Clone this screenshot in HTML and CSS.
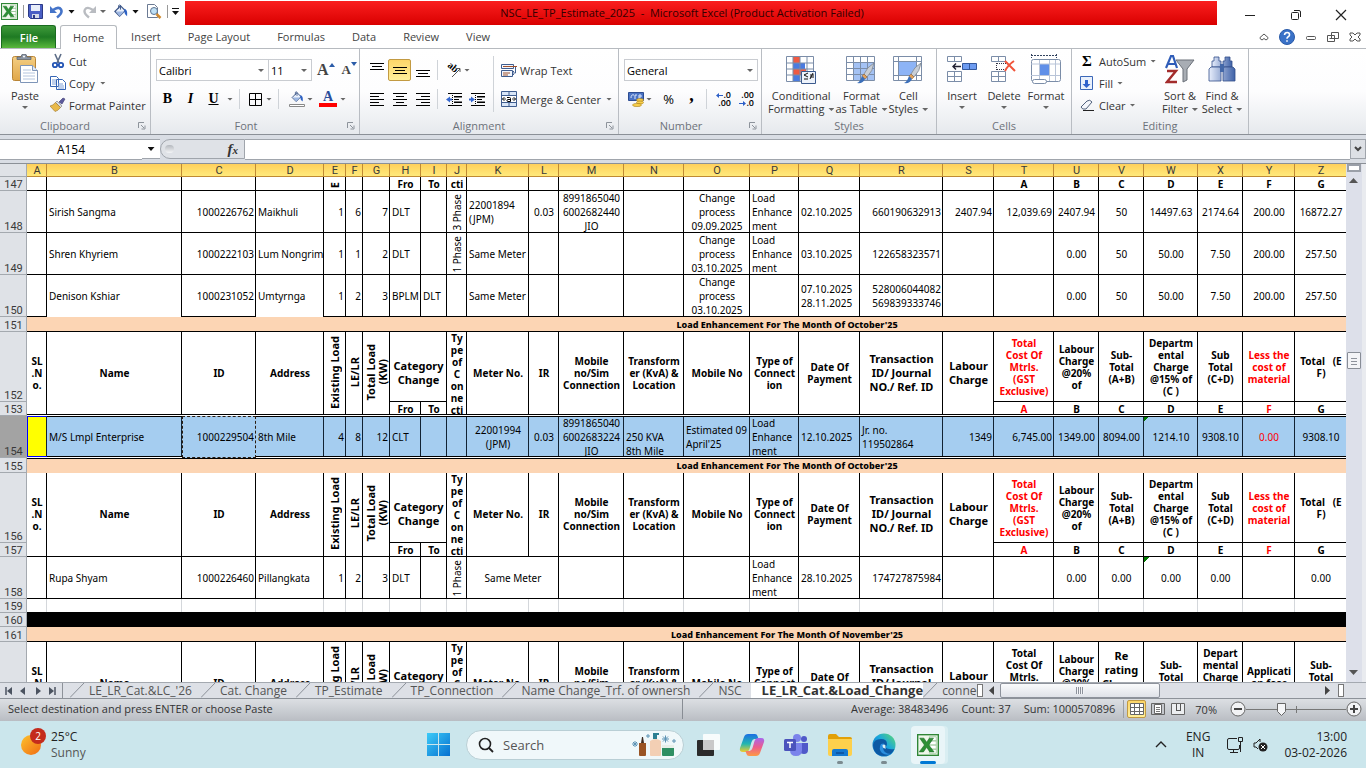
FILE: index.html
```
<!doctype html>
<html lang="en">
 <head>
  <meta charset="utf-8">
  <title>NSC_LE_TP_Estimate_2025 - Microsoft Excel</title>
  <link rel="stylesheet" href="styles.css">
 </head>

 <body>
  <!-- shared icon shapes -->
  <svg class="defs" width="0" height="0">
   <defs>
    <linearGradient id="steel" x1="0" y1="0" x2="1" y2="0"><stop offset="0" stop-color="#e8eefc"/><stop offset="1" stop-color="#3f62a8"/></linearGradient>
    <linearGradient id="clip" x1="0" y1="0" x2="0" y2="1"><stop offset="0" stop-color="#f4cf85"/><stop offset="1" stop-color="#e0a648"/></linearGradient>
    <linearGradient id="sun" x1="0" y1="0" x2="1" y2="1"><stop offset="0" stop-color="#fdc32e"/><stop offset="1" stop-color="#f06a12"/></linearGradient>
    <linearGradient id="win" x1="0" y1="0" x2="1" y2="1"><stop offset="0" stop-color="#3ccbf8"/><stop offset="1" stop-color="#0670d0"/></linearGradient>
    <linearGradient id="edge" x1="0" y1="1" x2="1" y2="0"><stop offset="0" stop-color="#0b5bb5"/><stop offset=".55" stop-color="#1aa6dd"/><stop offset="1" stop-color="#5fdc6c"/></linearGradient>
    <linearGradient id="cop1" x1="0" y1="0" x2="0" y2="1"><stop offset="0" stop-color="#1b6fe4"/><stop offset=".55" stop-color="#23b7b0"/><stop offset="1" stop-color="#f1cd2b"/></linearGradient>
    <linearGradient id="cop2" x1="0" y1="0" x2="0" y2="1"><stop offset="0" stop-color="#a766ee"/><stop offset=".5" stop-color="#ec5d8d"/><stop offset="1" stop-color="#fd9a44"/></linearGradient>
    <symbol id="excel" viewBox="0 0 16 16">
     <rect x=".5" y=".5" width="15" height="15" fill="#eef7ea" stroke="#2f8636"/>
     <path d="M9 2h5v12H9z" fill="#fff" stroke="#9bc79b" stroke-width=".6"/>
     <path d="M9 5h5M9 8h5M9 11h5" stroke="#7db77d" stroke-width=".7"/>
     <path d="M2 3h3l2 3 2-3h3L8.600 8l3.800 5H9.300L7 9.700 4.700 13H1.600l3.800-5z" fill="#2d8f35" stroke="#176b22" stroke-width=".4"/>
    </symbol>
    <symbol id="bucket" viewBox="0 0 16 16">
     <path d="M2 8l6-6 5 5-6 6z" fill="#eaf0fa" stroke="#3c5688" stroke-width="1.200"/>
     <path d="M3 8h9l-5 5z" fill="#9db7e3"/>
     <path d="M6 5V1.500q1.500-1 2 0V6" fill="none" stroke="#3c5688"/>
     <path d="M12 5q4 1 3 8-3-2-3-5z" fill="#2d62c4"/>
    </symbol>
    <symbol id="brush" viewBox="0 0 18 22">
     <path d="M17 1Q10 5 7 12l3 3q6-6 7-14z" fill="#c8ced6" stroke="#737d88" stroke-width=".7"/>
     <path d="M7 12l3 3-2 2-3-3z" fill="#e1a25c" stroke="#8c5a27" stroke-width=".5"/>
     <path d="M5 14l3 3q-2 5-8 4 3-1 5-7z" fill="#3b6fb9"/>
    </symbol>
    <symbol id="launch" viewBox="0 0 8 8">
     <path d="M.5 6V.5H6" fill="none" stroke="#8d939b"/><path d="M3 3l3 3M7 3.500V7H3.500" fill="none" stroke="#8d939b"/>
    </symbol>
   </defs>
  </svg>

  <header class="titlebar">
   <div class="quick">
    <svg width="17" height="17"><use href="#excel"/></svg>
    <i class="bar"></i>
    <button aria-label="Save"><svg width="15" height="15" viewBox="0 0 15 15"><path d="M.5.5h14v14h-12l-2-2z" fill="#4a5fc4" stroke="#2c3a86"/><path d="M3 1h9v6H3z" fill="#e8edf9"/><path d="M4 10h7v4H4z" fill="#d5dbe8"/><path d="M5 11h2v3H5z" fill="#2c3a86"/></svg></button>
    <button aria-label="Undo" class="drop"><svg width="14" height="14" viewBox="0 0 14 14"><path d="M3 5q6-4 8-.5T7 12.500" fill="none" stroke="#4574c9" stroke-width="2.600"/><path d="M0 1v7h7z" fill="#4574c9"/></svg><i class="caret dark"></i></button>
    <button aria-label="Redo" class="drop"><svg width="14" height="14" viewBox="0 0 14 14"><path d="M11 5Q5 1 3 4.500T7 12.500" fill="none" stroke="#b9bcc1" stroke-width="2.400"/><path d="M14 1v7H7z" fill="#b9bcc1"/></svg><i class="caret"></i></button>
    <button aria-label="Fill colour" class="drop"><svg width="15" height="15"><use href="#bucket"/></svg><i class="caret dark"></i></button>
    <button aria-label="Print preview"><svg width="16" height="15" viewBox="0 0 16 15"><path d="M1.500.5h7l3 3v10h-10z" fill="#fff" stroke="#6b7a93"/><circle cx="8" cy="7" r="3.500" fill="#bfe0f5" stroke="#5c7391"/><path d="M10.500 10l4 4" stroke="#d08a30" stroke-width="2.500"/></svg></button>
    <i class="bar"></i>
    <button aria-label="Customize toolbar" class="custom"><i class="caret dark"></i></button>
   </div>
   <h1>NSC_LE_TP_Estimate_2025 &nbsp;-&nbsp; Microsoft Excel (Product Activation Failed)</h1>
   <div class="winctl">
    <button aria-label="Minimize"><svg width="12" height="12"><path d="M1 6.500h10" stroke="#222"/></svg></button>
    <button aria-label="Restore"><svg width="12" height="12"><rect x="1.500" y="3.500" width="7" height="7" rx="1" fill="none" stroke="#222"/><path d="M4 1.500h5q1.500 0 1.500 1.500v5" fill="none" stroke="#222"/></svg></button>
    <button aria-label="Close"><svg width="12" height="12"><path d="M1 1l10 10M11 1L1 11" stroke="#222" stroke-width="1.200"/></svg></button>
   </div>
  </header>

  <nav class="tabs">
   <button class="file">File</button>
   <button class="active">Home</button>
   <button>Insert</button>
   <button>Page Layout</button>
   <button>Formulas</button>
   <button>Data</button>
   <button>Review</button>
   <button>View</button>
   <div class="docctl">
    <button aria-label="Collapse ribbon"><svg width="10" height="10"><path d="M1 5.500L5 2l4 3.500v1L7 8 5 6.500 3 8 1 6.500z" fill="#fff" stroke="#555"/></svg></button>
    <button aria-label="Help"><svg width="16" height="16"><circle cx="8" cy="8" r="7.500" fill="#3a72c8" stroke="#2a5aa8"/><path d="M5.500 6q.3-2.500 2.700-2.500T10.500 6q0 1-1.300 1.800T8 9.800M8 11.300v1.500" fill="none" stroke="#fff" stroke-width="1.600"/></svg></button>
    <button aria-label="Minimize window"><svg width="12" height="10"><rect x="1.500" y="4.500" width="9" height="3" rx="1" fill="#fff" stroke="#555"/></svg></button>
    <button aria-label="Restore window"><svg width="12" height="12"><path d="M4.500 1.500h7v6h-7zM.5 4.500h7v6h-7z" fill="#fff" stroke="#555"/><path d="M2.500 7.500h3" stroke="#555"/></svg></button>
    <button aria-label="Close window"><svg width="12" height="10"><path d="M1 1h3l2 2 2-2h3v2L9 5l2 2v2H8L6 7 4 9H1V7l2-2-2-2z" fill="#fff" stroke="#555"/></svg></button>
   </div>
  </nav>

  <main class="ribbon">
   <section class="group clipboard">
    <div class="body">
     <button class="big">
      <svg width="28" height="30" viewBox="0 0 28 30"><rect x="1.500" y="2.500" width="23" height="24" rx="2" fill="url(#clip)" stroke="#b98537"/><path d="M6 5.500V3h4q0-3 3-3t3 3h4v2.500z" fill="#8b95a3" stroke="#545d69" stroke-width=".7"/><circle cx="13" cy="2.500" r="1" fill="#fff"/><path d="M9.500 11.500h12l5 5v12h-17z" fill="#fff" stroke="#7e95b8"/><path d="M12 16h8M12 19h12M12 22h12M12 25h12" stroke="#b4c5de"/><path d="M21.500 11.500v5h5" fill="#dfe8f5" stroke="#7e95b8"/></svg>
      <span>Paste</span><i class="caret"></i>
     </button>
     <div class="stack">
      <button class="line"><svg width="16" height="16" viewBox="0 0 16 16"><path d="M5 1l4 9M11 1L7 10" stroke="#5d6d87" stroke-width="1.600"/><circle cx="5" cy="12" r="2.200" fill="none" stroke="#2455b5" stroke-width="1.800"/><circle cx="11" cy="12" r="2.200" fill="none" stroke="#2455b5" stroke-width="1.800"/></svg>Cut</button>
      <button class="line"><svg width="16" height="16" viewBox="0 0 16 16"><path d="M.5 1.500h6l2 2v8h-8zM6.500 4.500h6l3 3v7h-9z" fill="#fff" stroke="#3565b5"/><path d="M2 5h4M2 7h4M2 9h4M8 9h5M8 11h6M8 13h6" stroke="#7fa0d8"/></svg>Copy<i class="caret"></i></button>
      <button class="line"><svg width="16" height="16" viewBox="0 0 16 16"><path d="M9 5l4-4 2 1-3 5z" fill="#5c5a9c" stroke="#3b3970" stroke-width=".6"/><path d="M7 4l5 5-1.500 1.500-5-5z" fill="#d8dce4" stroke="#777" stroke-width=".6"/><path d="M5.500 5.500l5 5Q8 14 5 14.500L0 9q3-.5 5.500-3.500z" fill="#e9b949" stroke="#9a762b" stroke-width=".6"/></svg>Format Painter</button>
     </div>
    </div>
    <footer>Clipboard<button class="launcher" aria-label="Clipboard options"><svg width="8" height="8"><use href="#launch"/></svg></button></footer>
   </section>

   <section class="group font">
    <div class="body rows">
     <div class="tools">
      <select class="family" aria-label="Font"><option>Calibri</option></select><select class="size" aria-label="Font size"><option>11</option></select>
      <button class="grow" aria-label="Grow font">A<svg width="6" height="4"><path d="M0 4l3-4 3 4z" fill="#2b5ca8"/></svg></button><button class="grow small" aria-label="Shrink font">A<svg width="6" height="4"><path d="M0 0h6L3 4z" fill="#2b5ca8"/></svg></button>
     </div>
     <div class="tools">
      <button class="t b">B</button><button class="t i">I</button><button class="t u">U</button><i class="caret"></i>
      <i class="sep wide"></i>
      <button class="t" aria-label="Borders"><svg width="13" height="13"><path d="M.5.5h12v12H.5zM6.500 0v13M0 6.500h13" fill="none" stroke="#000"/></svg></button><i class="caret"></i>
      <i class="sep wide"></i>
      <button class="t bucket" aria-label="Fill colour"><svg width="16" height="16" viewBox="0 0 16 16"><use href="#bucket" width="14" height="13" x="1"/><path d="M.5 13.500h15v2H.5z" fill="#fff" stroke="#888"/></svg></button><i class="caret"></i>
      <button class="t fc">A</button><i class="caret"></i>
     </div>
    </div>
    <footer>Font<button class="launcher" aria-label="Font options"><svg width="8" height="8"><use href="#launch"/></svg></button></footer>
   </section>

   <section class="group alignment">
    <div class="body">
     <div class="rows">
      <div class="tools">
       <button class="t" aria-label="Top align"><svg width="14" height="16"><path d="M0 1.500h14M2 4.500h10M0 7.500h14" stroke="#000"/></svg></button>
       <button class="t on" aria-label="Middle align"><svg width="14" height="16"><path d="M0 5.500h14M2 8.500h10M0 11.500h14" stroke="#000"/></svg></button>
       <button class="t" aria-label="Bottom align"><svg width="14" height="16"><path d="M0 8.500h14M2 11.500h10M0 14.500h14" stroke="#000"/></svg></button>
       <i class="sep"></i>
       <button class="t" aria-label="Orientation"><svg width="16" height="16" viewBox="0 0 16 16"><text class="ab" x="1" y="8" transform="rotate(40 6 6)">ab</text><path d="M6 15l8-8M14 10V6.500h-3.500" fill="none" stroke="#555"/></svg></button><i class="caret"></i>
      </div>
      <div class="tools">
       <button class="t" aria-label="Align left"><svg width="14" height="13"><path d="M0 .5h14M0 3.500h9M0 6.500h14M0 9.500h9M0 12.500h14" stroke="#000"/></svg></button>
       <button class="t" aria-label="Center"><svg width="14" height="13"><path d="M0 .5h14M3 3.500h8M0 6.500h14M3 9.500h8M0 12.500h14" stroke="#000"/></svg></button>
       <button class="t" aria-label="Align right"><svg width="14" height="13"><path d="M0 .5h14M5 3.500h9M0 6.500h14M5 9.500h9M0 12.500h14" stroke="#000"/></svg></button>
       <i class="sep"></i>
       <button class="t" aria-label="Decrease indent"><svg width="16" height="13"><path d="M2 .5h14M8 3.500h8M8 6.500h5M8 9.500h8M2 12.500h14" stroke="#000"/><path d="M8 4h8M8 9h8" stroke="#000"/><path d="M6.500 0v13" stroke="#000" stroke-dasharray="1 1"/><path d="M0 6.500l4-3v2h2v2H4v2z" fill="#3567cf"/></svg></button>
       <button class="t" aria-label="Increase indent"><svg width="16" height="13"><path d="M2 .5h14M8 3.500h8M8 6.500h5M8 9.500h8M2 12.500h14" stroke="#000"/><path d="M8 4h8M8 9h8" stroke="#000"/><path d="M6.500 0v13" stroke="#000" stroke-dasharray="1 1"/><path d="M6 6.500l-4-3v2H0v2h2v2z" fill="#3567cf"/></svg></button>
      </div>
     </div>
     <i class="sep tall"></i>
     <div class="rows">
      <button class="line"><svg width="16" height="16" viewBox="0 0 16 16"><path d="M.5 2.500h12v4H.5zM.5 8.500h11v6H.5z" fill="#f2f6fd" stroke="#3f5d8f"/><path d="M2 4.500h14" stroke="#a0522d"/><path d="M2 11h7M2 13h5" stroke="#a0522d"/><path d="M14.500 5v6h-3m1.500-2l-2 2 2 2" fill="none" stroke="#3f5d8f"/></svg>Wrap Text</button>
      <button class="line"><svg width="16" height="16" viewBox="0 0 16 16"><path d="M.5.5h15v15H.5z" fill="#d9e6f8" stroke="#3f5d8f"/><path d="M0 4.500h16M0 11.500h16M8 0v4M8 12v4" stroke="#3f5d8f"/><path d="M1 5h14v6H1z" fill="#fff"/><path d="M1 8h4M11 8h4M3.500 6L1.500 8l2 2M12.500 6l2 2-2 2" fill="none" stroke="#333"/><path d="M6 6.500h2.500q1 0 1 1v3H7q-1 0-1-1t1-1h2" fill="none" stroke="#000"/></svg>Merge &amp; Center<i class="caret"></i></button>
     </div>
    </div>
    <footer>Alignment<button class="launcher" aria-label="Alignment options"><svg width="8" height="8"><use href="#launch"/></svg></button></footer>
   </section>

   <section class="group number">
    <div class="body rows">
     <div class="tools"><select class="format" aria-label="Number format"><option>General</option></select></div>
     <div class="tools">
      <button class="t" aria-label="Accounting format"><svg width="16" height="16" viewBox="0 0 16 16"><path d="M.5 1.500h15v8H.5z" fill="#4a73c4" stroke="#2d4d92"/><path d="M3 7q0-4 3-3M7 8V4h2M11 8V4h2v2h-2" fill="none" stroke="#dbe6fa"/><ellipse cx="12" cy="9" rx="3.500" ry="1.500" fill="#f7cf4c" stroke="#a87d18" stroke-width=".6"/><ellipse cx="12" cy="11.500" rx="3.500" ry="1.500" fill="#f7cf4c" stroke="#a87d18" stroke-width=".6"/><ellipse cx="9" cy="14" rx="4.500" ry="1.600" fill="#f7cf4c" stroke="#a87d18" stroke-width=".6"/></svg></button><i class="caret"></i>
      <button class="t pct">%</button><button class="t comma">,</button>
      <i class="sep"></i>
      <button class="t dec" aria-label="Increase decimal"><span><svg width="7" height="5"><path d="M0 2.500L3 0v2h4v1H3v2z" fill="#2d5fc8"/></svg>.0</span><span>.00</span></button><button class="t dec" aria-label="Decrease decimal"><span>.00</span><span><svg width="7" height="5"><path d="M7 2.500L4 0v2H0v1h4v2z" fill="#2d5fc8"/></svg>.0</span></button>
     </div>
    </div>
    <footer>Number<button class="launcher" aria-label="Number options"><svg width="8" height="8"><use href="#launch"/></svg></button></footer>
   </section>

   <section class="group styles">
    <div class="body">
     <button class="big"><svg width="30" height="30" viewBox="0 0 30 30"><path d="M.5 2.500h27v25H.5z" fill="#fff" stroke="#7b8da8"/><path d="M7 3h7v6H7zM7 15h13v6H7z" fill="#ef5a43"/><path d="M7 9h12v6H7zM7 21h7v6H7z" fill="#4a7be0"/><path d="M0 9h27M0 15h27M0 21h27M7 3v24M14 3v24M21 3v24" stroke="#7b8da8"/><path d="M15.500 17.500h14v12h-14z" fill="#eef3fb" stroke="#3b5a8e"/><path d="M22 19l-4 2 4 2M18 25h4M24 21h4M24 23h4M27 19l-3 6" fill="none" stroke="#111"/></svg><span>Conditional</span><span>Formatting<i class="caret"></i></span></button>
     <button class="big"><svg width="30" height="30" viewBox="0 0 30 30"><path d="M.5 2.500h28v24H.5z" fill="#fff" stroke="#7b8da8"/><path d="M7 8h21v18H7z" fill="#a4c2f4"/><path d="M0 8.500h28M0 14.500h28M0 20.500h28M7.500 3v24M14.500 3v24M21.500 3v24" stroke="#7b8da8"/><use href="#brush" x="10" y="8" width="20" height="22"/></svg><span>Format</span><span>as Table<i class="caret"></i></span></button>
     <button class="big"><svg width="30" height="30" viewBox="0 0 30 30"><path d="M.5 2.500h28v24H.5z" fill="#fff" stroke="#7b8da8"/><path d="M5 7h19v14H5z" fill="#8db4f6"/><path d="M0 7.500h28M0 21.500h28M5.500 3v24M23.500 3v24" stroke="#7b8da8"/><use href="#brush" x="10" y="8" width="20" height="22"/></svg><span>Cell</span><span>Styles<i class="caret"></i></span></button>
    </div>
    <footer>Styles</footer>
   </section>

   <section class="group cells">
    <div class="body">
     <button class="big"><svg width="30" height="30" viewBox="0 0 30 30"><path d="M.5 2.500h14v5H.5zM.5 17.500h14v10H.5zM0 22.500h14M7.500 3v4M7.500 18v9" fill="#fff" stroke="#7b8da8"/><path d="M15.500 9.500h14v6h-14z" fill="#6d9bf0" stroke="#33589d"/><path d="M22.500 10v5" stroke="#33589d"/><path d="M6 12.500h8M9 9.500l-3 3 3 3" fill="none" stroke="#223" stroke-width="1.400"/></svg><span>Insert</span><i class="caret"></i></button>
     <button class="big"><svg width="30" height="30" viewBox="0 0 30 30"><path d="M2.500 2.500h14v5h-14zM2.500 17.500h14v10h-14zM2 22.500h14M9.500 3v4M9.500 18v9" fill="#fff" stroke="#7b8da8"/><path d="M8 9.500h9M8 15.500h9M7.500 9v7" fill="none" stroke="#334" stroke-dasharray="1 1"/><path d="M16 7q4 4 10 10M25 7q-6 4-9 10" fill="none" stroke="#f0543a" stroke-width="2"/></svg><span>Delete</span><i class="caret"></i></button>
     <button class="big"><svg width="30" height="30" viewBox="0 0 30 30"><path d="M0 1.500h26M.5 0v4M25.500 0v4" stroke="#33435f" stroke-dasharray="2 1"/><rect x=".5" y="5.500" width="29" height="22" rx="2" fill="#fff" stroke="#7b8da8"/><path d="M8 10h10v12H8z" fill="#5f8fe8"/><path d="M0 10h29M0 21.500h29M8.500 6v21M18.500 6v21M24.500 6v21" stroke="#b8c4d8"/><rect x="1.500" y="25.500" width="14" height="4" rx="2" fill="#fff" stroke="#7b8da8"/></svg><span>Format</span><i class="caret"></i></button>
    </div>
    <footer>Cells</footer>
   </section>

   <section class="group editing">
    <div class="body">
     <div class="stack">
      <button class="line"><b class="sigma">Σ</b>AutoSum<i class="caret"></i></button>
      <button class="line"><svg width="14" height="16" viewBox="0 0 14 16"><path d="M.5 1.500h12v13H.5z" fill="#eaf1fc" stroke="#3c68b8"/><path d="M5 5h3v4h2.500l-4 4-4-4H5z" fill="#2f62cc"/></svg>Fill<i class="caret"></i></button>
      <button class="line"><svg width="14" height="16" viewBox="0 0 14 16"><path d="M1 10l6-6q3-2 5 1l-6 7q-4 1-5-2z" fill="#f4f6fb" stroke="#51617c"/><path d="M3 13.500h11" stroke="#222"/></svg>Clear<i class="caret"></i></button>
     </div>
     <button class="big"><svg width="30" height="30" viewBox="0 0 30 30"><path d="M1 14L6 2h2l4 12M3 10h7" fill="none" stroke="#2f5cb8" stroke-width="2.200"/><path d="M2 17h9L2 28h10" fill="none" stroke="#a32c2c" stroke-width="2.400"/><path d="M11 6h18l-7 9v11l-4 2V15z" fill="#a8adb4" stroke="#6a7079"/></svg><span>Sort &amp;</span><span>Filter<i class="caret"></i></span></button>
     <button class="big"><svg width="30" height="30" viewBox="0 0 30 30"><path d="M7 3h5v4h2v6H5V7h2zM18 3h5v4h2v6h-9V7h2z" fill="url(#steel)" stroke="#324f8a" stroke-width=".8"/><path d="M4 13h9l1 2v12H2V15zM17 13h9l2 2v12H16V15z" fill="url(#steel)" stroke="#324f8a" stroke-width=".8"/><path d="M13 10h4v8h-4z" fill="#4468a8"/></svg><span>Find &amp;</span><span>Select<i class="caret"></i></span></button>
    </div>
    <footer>Editing</footer>
   </section>
  </main>

  <div class="formula">
   <input class="name" aria-label="Name box" value="A154">
   <button class="namedrop" aria-label="Name list"><i class="caret dark"></i></button>
   <div class="fx"><span class="knob"></span><button><em>f</em><small>x</small></button></div>
   <input class="entry" aria-label="Formula">
   <button class="expand" aria-label="Expand formula bar"><svg width="8" height="6"><path d="M1 1l3 3 3-3" fill="none" stroke="#444" stroke-width="2"/></svg></button>
  </div>

  <div class="work">
   <div class="sheet"><table id="grid"></table></div>
   <div class="vscroll">
    <i class="split"></i>
    <i class="up"></i>
    <i class="thumb"></i>
    <i class="down"></i>
   </div>
  </div>

  <div class="sheetbar">
   <div class="nav">
    <button aria-label="First sheet"><svg width="8" height="8"><path d="M1 0v8" stroke="#4b5360" stroke-width="1.500"/><path d="M7 0v8L2 4z" fill="#4b5360"/></svg></button>
    <button aria-label="Previous sheet"><svg width="8" height="8"><path d="M6 0v8L1 4z" fill="#4b5360"/></svg></button>
    <button aria-label="Next sheet"><svg width="8" height="8"><path d="M2 0v8l5-4z" fill="#4b5360"/></svg></button>
    <button aria-label="Last sheet"><svg width="8" height="8"><path d="M7 0v8" stroke="#4b5360" stroke-width="1.500"/><path d="M1 0v8l5-4z" fill="#4b5360"/></svg></button>
   </div>
   <div class="sheets" id="sheets"></div>
   <div class="hscroll">
    <i class="split"></i>
    <i class="left"></i>
    <div class="track"><i class="thumb"></i></div>
    <i class="right"></i>
    <i class="split"></i>
   </div>
  </div>

  <div class="status">
   <span class="msg">Select destination and press ENTER or choose Paste</span>
   <span class="sums"><span>Average: 38483496</span><span>Count: 37</span><span>Sum: 1000570896</span></span>
   <div class="views">
    <button class="on" aria-label="Normal view"><svg width="14" height="12"><path d="M.5.5h13v11H.5zM0 4.500h14M0 8.500h14M4.500 0v12M9.500 0v12" fill="#fff" stroke="#666"/></svg></button>
    <button aria-label="Page layout view"><svg width="14" height="12"><path d="M.5.5h13v11H.5z" fill="#c5c8cd" stroke="#666"/><path d="M3.500 1.500h7v9h-7z" fill="#fff" stroke="#666"/><path d="M5 4.500h4M5 6.500h4M5 8.500h4" stroke="#777"/></svg></button>
    <button aria-label="Page break view"><svg width="14" height="12"><path d="M.5.5h13v11H.5z" fill="#eceef0" stroke="#666"/><path d="M5.500 1v6M9.500 1v6M5 7.500h5" stroke="#555"/></svg></button>
   </div>
   <span class="zoom">70%</span>
   <button class="round" aria-label="Zoom out"><svg width="16" height="16"><circle cx="8" cy="8" r="7" fill="#f2f3f5" stroke="#666"/><path d="M4 8h8" stroke="#444" stroke-width="2"/></svg></button>
   <input type="range" aria-label="Zoom" min="0" max="100" value="34">
   <button class="round" aria-label="Zoom in"><svg width="16" height="16"><circle cx="8" cy="8" r="7" fill="#f2f3f5" stroke="#666"/><path d="M4 8h8M8 4v8" stroke="#444" stroke-width="2"/></svg></button>
  </div>

  <footer class="taskbar">
   <div class="weather">
    <svg width="28" height="30" viewBox="0 0 28 30"><circle cx="11" cy="18" r="10" fill="url(#sun)"/><circle cx="18" cy="9" r="8" fill="#c42b1c"/><text class="badge" x="18" y="13" text-anchor="middle">2</text></svg>
    <div><span>25°C</span><span class="dim">Sunny</span></div>
   </div>
   <div class="apps">
    <button class="app" aria-label="Start"><svg width="24" height="24"><path d="M0 0h11v11H0zM12 0h11v11H12zM0 12h11v11H0zM12 12h11v11H12z" fill="url(#win)"/></svg></button>
    <label class="search">
     <svg width="16" height="16" viewBox="0 0 16 16"><circle cx="7" cy="7" r="5.500" fill="none" stroke="#222" stroke-width="1.600"/><path d="M11 11l4 4" stroke="#222" stroke-width="1.800"/></svg>
     <input placeholder="Search" aria-label="Search">
     <svg width="46" height="26" viewBox="0 0 46 26"><path d="M8 11h7v12q0 1-1 1H9q-1 0-1-1z" fill="#9a5424"/><path d="M10 11l1-6h1l1 6z" fill="#3d2b22"/><path d="M19 9q6-4 11 0v14q0 1-1 1h-9q-1 0-1-1z" fill="#f3cfb4"/><path d="M23 7V2h5M25 2v5" fill="none" stroke="#2b7f92" stroke-width="2"/><path d="M31 13h12v3H31z" fill="#e7efe9"/><path d="M31 16h12v7q0 1-1 1H32q-1 0-1-1z" fill="#2f8f63"/><path d="M1 12h6M4 9v6M2 10l4 4M6 10l-4 4M15 4h4M17 2v4M31 7h7M34.500 3.500v7M32 4.500l5 5M37 4.500l-5 5M41 9h4M43 7v4" stroke="#5c93b5"/></svg>
    </label>
    <button class="app" aria-label="Task view"><svg width="24" height="24"><rect x="1" y="7" width="17" height="16" rx="1" fill="#2b2b2b"/><rect x="7" y="1" width="17" height="16" rx="1" fill="#fff" opacity=".85"/><path d="M7 7h11v10H7z" fill="#c9c9c9"/></svg></button>
    <button class="app" aria-label="Copilot"><svg width="26" height="24" viewBox="0 0 26 24"><path d="M9 1h7q2 0 2.500 2l1 3h-4q-2 0-3 3l-2 7q-1 3-4 3H4q-4 0-3-4L5 4q1-3 4-3z" fill="url(#cop1)"/><path d="M17 23h-7q-2 0-2.500-2l-1-3h4q2 0 3-3l2-7q1-3 4-3H22q4 0 3 4l-4 11q-1 3-4 3z" fill="url(#cop2)"/></svg></button>
    <button class="app" aria-label="Teams"><svg width="26" height="24" viewBox="0 0 26 24"><circle cx="14" cy="5" r="4" fill="#7b83eb"/><circle cx="21" cy="6" r="3" fill="#5059c9"/><path d="M17 10h8v7q0 4-4 4t-4-3z" fill="#5059c9"/><path d="M7 10h12v7q0 6-6 6t-6-6z" fill="#7b83eb"/><rect x="1" y="6" width="12" height="12" rx="1.500" fill="#4b53bc"/><path d="M4 9.500h6M7 9.500V15" stroke="#fff" stroke-width="1.500"/></svg></button>
    <button class="app run" aria-label="File Explorer"><svg width="26" height="24" viewBox="0 0 26 24"><path d="M1 3q0-2 2-2h6l3 3h11q2 0 2 2v3H1z" fill="#e2a008"/><path d="M1 6h24v15q0 2-2 2H3q-2 0-2-2z" fill="#fdd04c"/><path d="M5 23v-5q0-2 2-2h12q2 0 2 2v5z" fill="#1478d0"/><path d="M9 19h8v2H9z" fill="#0d57a6"/></svg></button>
    <button class="app run" aria-label="Edge"><svg width="26" height="24" viewBox="0 0 26 24"><circle cx="13" cy="12" r="11.500" fill="url(#edge)"/><path d="M2 12Q3 6 10 6q6 0 6 5 0 2-1.500 3 2 3 9 2-3 7-10.500 7Q3 23 2 12z" fill="#0c59a4"/><path d="M10 11q-3 5 1 9 4 3 9 1-8 0-8-7 0-2 1-3 0-1-3 0z" fill="#2a8fe0"/><path d="M11.500 12q2-1 3 .5-.5 2 .5 3-3.500.5-3.500-3.500z" fill="#d9eef5"/></svg></button>
    <button class="app run cur" aria-label="Excel"><svg width="22" height="22"><use href="#excel"/></svg></button>
   </div>
   <div class="tray">
    <svg width="12" height="8"><path d="M1 6l5-5 5 5" fill="none" stroke="#222" stroke-width="1.400"/></svg>
    <div class="two mid"><span>ENG</span><span>IN</span></div>
    <svg width="18" height="18" viewBox="0 0 18 18"><path d="M11 2.500H3q-1.500 0-1.500 1.500v8q0 1.500 1.500 1.500h9q1.500 0 1.500-1.500V9M7.500 13.500v3M4 16.500h8" fill="none" stroke="#222"/><path d="M12.500 1.500h4v4h-4zM14.500 6v10" fill="none" stroke="#222"/></svg>
    <svg width="16" height="16" viewBox="0 0 16 16"><path d="M1 6h2l4-4v3M1 6v4h2l2 2" fill="none" stroke="#222"/><circle cx="10" cy="10" r="4.500" fill="#222"/><path d="M8 8l4 4M12 8l-4 4" stroke="#fff"/></svg>
    <div class="two end"><span>13:00</span><span>03-02-2026</span></div>
   </div>
  </footer>

  <script>

	// column letter and width, AA runs off the right edge
	const cols = [
		['A', 20], ['B', 135], ['C', 74], ['D', 68], ['E', 22], ['F', 17], ['G', 27], ['H', 31], ['I', 26],
		['J', 20], ['K', 62], ['L', 30], ['M', 65], ['N', 60], ['O', 66], ['P', 49], ['Q', 61], ['R', 83],
		['S', 51], ['T', 60], ['U', 45], ['V', 45], ['W', 54], ['X', 45], ['Y', 52], ['Z', 52], ['AA', 200]
	];

	const load = 'Load<br>Enhance<br>ment';

	// "align|text", align is l, r, c, or v for rotated text
	const people = {
		148: ['', 'l|Sirish Sangma', 'r|1000226762', 'l|Maikhuli', 'r|1', 'r|6', 'r|7', 'l|DLT', '', 'v|3 Phase', 'l|22001894<br>(JPM)', 'c|0.03', 'c|8991865040<br>6002682440<br>JIO', '', 'c|Change<br>process<br>09.09.2025', 'l|' + load, 'l|02.10.2025', 'r|660190632913', 'r|2407.94', 'r|12,039.69', 'c|2407.94', 'c|50', 'c|14497.63', 'c|2174.64', 'c|200.00', 'c|16872.27'],
		149: ['', 'l|Shren Khyriem', 'r|1000222103', 'l|Lum Nongrim', 'r|1', 'r|1', 'r|2', 'l|DLT', '', 'v|1 Phase', 'l|Same Meter', '', '', '', 'c|Change<br>process<br>03.10.2025', 'l|' + load, 'l|03.10.2025', 'r|122658323571', '', '', 'c|0.00', 'c|50', 'c|50.00', 'c|7.50', 'c|200.00', 'c|257.50'],
		150: ['', 'l|Denison Kshiar', 'r|1000231052', 'l|Umtyrnga', 'r|1', 'r|2', 'r|3', 'l|BPLM', 'l|DLT', '', 'l|Same Meter', '', '', '', 'c|Change<br>process<br>03.10.2025', '', 'l|07.10.2025<br>28.11.2025', 'r|528006044082<br>569839333746', '', '', 'c|0.00', 'c|50', 'c|50.00', 'c|7.50', 'c|200.00', 'c|257.50'],
		154: ['', 'l|M/S Lmpl Enterprise', 'r|1000229504', 'l|8th Mile', 'r|4', 'r|8', 'r|12', 'l|CLT', '', '', 'c|22001994<br>(JPM)', 'c|0.03', 'c|8991865040<br>6002683224<br>JIO', 'l bot|250 KVA<br>8th Mile', "l|Estimated 09<br>April'25", 'l|' + load, 'l|12.10.2025', 'l|Jr. no.<br>119502864', 'r|1349', 'r|6,745.00', 'c|1349.00', 'c|8094.00', 'c err|1214.10', 'c|9308.10', 'c red|0.00', 'c|9308.10'],
		158: ['', 'l|Rupa Shyam', 'r|1000226460', 'l|Pillangkata', 'r|1', 'r|2', 'r|3', 'l|DLT', '', 'v|1 Phase', 'c wide|Same Meter', null, '', '', '', 'l|' + load, 'l|28.10.2025', 'r|174727875984', '', '', 'c|0.00', 'c|0.00', 'c err|0.00', 'c|0.00', '', 'c|0.00']
	};

	// merged heading cells on the left, then the ones with a letter row below
	const merged = ['SL<br>.N<br>o.', 'Name', 'ID', 'Address', 'v|Existing Load', 'v|LE/LR', 'v|Total Load<br>(KW)', null, null,
		'full|Ty<br>pe<br>of<br>C<br>on<br>ne<br>cti', 'Meter No.', 'IR', 'Mobile<br>no/Sim<br>Connection', 'Transform<br>er (KvA) &amp;<br>Location', 'Mobile No', 'Type of<br>Connect<br>ion', 'Date Of<br>Payment', 'L|Transaction<br>ID/ Journal<br>NO./ Ref. ID', 'L|Labour<br>Charge'];
	const october = ['red|Total<br>Cost Of<br>Mtrls.<br>(GST<br>Exclusive)', 'Labour<br>Charge<br>@20%<br>of', 'Sub-<br>Total<br>(A+B)', 'Departm<br>ental<br>Charge<br>@15% of<br>(C )', 'Sub<br>Total<br>(C+D)', 'red|Less the<br>cost of<br>material', 'Total &nbsp; (E<br>F)'];
	const november = ['Total<br>Cost Of<br>Mtrls.<br>(GST<br>Exclusive)', 'Labour<br>Charge<br>@20%<br>of', 'L|Re<br>rating<br>Charge<br>&nbsp;', 'Sub-<br>Total<br>(A+B)', 'Depart<br>mental<br>Charge<br>@15%<br>of', 'Applicati<br>on fees', 'Sub-<br>Total<br>(C+D)'];

	function cell(spec, extra = '', attrs = '') {
		const at = spec.indexOf('|');
		const cls = at < 0 ? '' : spec.slice(0, at);
		let text = at < 0 ? spec : spec.slice(at + 1);
		if (cls === 'v') {
			text = '<span class="rot">' + text + '</span>';
		}
		return '<td class="' + (cls + ' ' + extra).trim() + '" ' + attrs + '>' + text + '</td>';
	}

	function row(no, cls, html) {
		return '<tr class="' + cls + '"><th scope="row">' + no + '</th>' + html + '<td></td></tr>';
	}

	function person(no, cls = '') {
		const html = people[no].map((spec) => {
			if (spec === null) return '';
			return cell(spec, '', spec.includes('wide|') ? 'colspan="2"' : '');
		}).join('');
		return row(no, 'tall ' + cls, html);
	}

	function band(no, month, cls = '') {
		return '<tr class="band ' + cls + '"><th scope="row">' + no + '</th><td colspan="27">' + month + '</td></tr>';
	}

	function heading(no, figures, cls = '') {
		let top = '';
		merged.forEach((spec, i) => {
			if (i === 7) top += cell('L|Category<br>Change', 'cat', 'colspan="2"');
			if (spec !== null) top += cell(spec, 'deep', 'rowspan="2"');
		});
		figures.forEach((spec) => { top += cell(spec) });

		let low = cell('Fro') + cell('To');
		'ABCDEFG'.split('').forEach((ch, i) => {
			low += cell(figures[i].startsWith('red') ? 'red|' + ch : ch);
		});
		return row(no, 'head ' + cls, top) + row(no + 1, 'head low ' + cls, low);
	}

	let html = '<colgroup><col class="rownum">' + cols.map((c) => '<col style="width:' + c[1] + 'px">').join('') + '</colgroup>';
	html += '<tr class="letters"><th class="corner"></th>' + cols.map((c) => '<th scope="col">' + c[0] + '</th>').join('') + '</tr>';

	const tail = ['', '', '', '', 'v|E', '', '', 'Fro', 'To', 'cti', '', '', '', '', '', '', '', '', '', 'A', 'B', 'C', 'D', 'E', 'F', 'G'];
	html += row(147, 'head low', tail.map((s) => cell(s)).join(''));
	html += person(148) + person(149) + person(150, 'last');
	html += band(151, "Load Enhancement For The Month Of October'25");
	html += heading(152, october, 'dbl');
	html += person(154, 'sel');
	html += band(155, "Load Enhancement For The Month Of October'25", 'open');
	html += heading(156, october, 'after');
	html += person(158);
	html += row(159, 'blank', cols.slice(1).map(() => '<td></td>').join(''));
	html += band(160, '', 'black');
	html += band(161, "Load Enhancement For The Month Of November'25");
	html += heading(162, november, 'cut');
	document.getElementById('grid').innerHTML = html;

	const names = ["LE_LR_Cat.&amp;LC_'26", 'Cat. Change', 'TP_Estimate', 'TP_Connection', 'Name Change_Trf. of ownersh', 'NSC', 'LE_LR_Cat.&amp;Load_Change', 'connection'];
	document.getElementById('sheets').innerHTML = names.map((name, i) =>
		'<button class="' + (i === 6 ? 'active' : '') + '"><svg width="15" height="15"><path d="M0 14.500L14 0" stroke="#8b9098"/></svg>' + name + '</button>').join('');

  </script>
 </body>
</html>
```
FILE: styles.css
```
* { box-sizing: border-box; }
body { margin: 0; height: 100vh; display: flex; flex-direction: column; overflow: hidden; background: #fff; color: #333; font: 11px/13px "Open Sans", sans-serif; }
button { margin: 0; padding: 0; border: 0; background: none; color: inherit; font: inherit; white-space: nowrap; }
input, select { margin: 0; font: inherit; color: #000; border-radius: 0; }
svg { display: block; flex: none; }
.defs { position: absolute; }

.caret { display: inline-block; flex: none; width: 6px; height: 3px; background: #666; clip-path: polygon(0 0, 100% 0, 50% 100%); }
.caret.dark { width: 7px; height: 4px; background: #111; }

/* title bar */
.titlebar { height: 25px; flex: none; display: flex; align-items: stretch; }
.quick { width: 185px; display: flex; align-items: center; gap: 7px; padding: 0 0 2px 1px; flex: none; }
.quick .bar { width: 1px; height: 13px; background: #999; margin: 0 -3px 0 -2px; }
.quick .drop { display: flex; align-items: center; gap: 4px; }
.quick .custom { border-top: 1px solid #111; padding-top: 2px; line-height: 0; }
.titlebar h1 { flex: 1; margin: 1px 0 0; padding-right: 38px; background: linear-gradient(#fa1f1f, #d90000); color: #300; font-size: 11px; font-weight: 400; line-height: 23px; text-align: center; white-space: nowrap; }
.winctl { width: 149px; flex: none; display: flex; align-items: center; justify-content: space-between; padding: 4px 19px 0 27px; }

/* ribbon tabs */
.tabs { height: 24px; flex: none; display: flex; border-bottom: 1px solid #b6babf; color: #444; }
.tabs > button { padding: 0 13px 0 14px; line-height: 23px; }
.tabs > .file { width: 55px; margin: 0 4px 0 1px; color: #fff; font-weight: 600; background: linear-gradient(#3f9a3a, #1e7a23 50%, #5ab83c); border: 1px solid #1a6b20; border-bottom: 0; border-radius: 3px 3px 0 0; }
.tabs > .active { margin-bottom: -1px; padding: 0 12px; background: #fff; border: 1px solid #b6babf; border-bottom: 0; border-radius: 3px 3px 0 0; }
.docctl { margin-left: auto; display: flex; align-items: center; gap: 10px; padding-right: 5px; }

/* ribbon */
.ribbon { height: 86px; flex: none; display: flex; background: linear-gradient(#fff, #fdfdfe 50%, #e6e9ed); border-bottom: 1px solid #8b9097; }
.group { display: flex; flex-direction: column; border-right: 1px solid #b9bdc3; flex: none; }
.group .body { flex: 1; display: flex; }
.group footer { position: relative; height: 18px; line-height: 19px; text-align: center; color: #6d727a; }
.launcher { position: absolute; right: 4px; bottom: 4px; }
.clipboard { width: 151px; }
.font { width: 209px; }
.alignment { width: 259px; }
.number { width: 143px; }
.styles { width: 175px; }
.cells { width: 135px; }
.editing { width: 177px; }
.clipboard footer { padding-right: 20px; }
.alignment footer { padding-right: 20px; }
.font footer, .number footer { padding-right: 18px; }

.big { display: flex; flex-direction: column; align-items: center; padding-top: 5px; }
.big svg { margin-bottom: 5px; }
.big .caret { margin-top: 4px; }
.big span .caret { margin: 0 0 2px 4px; }
.clipboard .big { width: 50px; }
.styles .body { padding-left: 6px; gap: 1px; }
.cells .body { padding-left: 4px; }
.cells .big { width: 42px; }
.editing .big { width: 42px; }
.stack { display: flex; flex-direction: column; padding-top: 1px; }
.editing .stack { width: 87px; padding-left: 8px; }
.line { display: flex; align-items: center; height: 22px; gap: 3px; }
.editing .line { gap: 5px; }
.line .caret { margin-left: 2px; }
.editing .line .caret { margin-left: -1px; }
.sigma { width: 14px; font: bold 15px "Liberation Serif", serif; color: #000; text-align: center; }

.rows { display: flex; }
.group .rows { flex-direction: column; gap: 7px; padding: 10px 0 0 5px; }
.alignment .body { padding: 0; }
.tools { display: flex; align-items: center; height: 22px; }
.t { width: 23px; height: 22px; display: flex; align-items: center; justify-content: center; color: #000; }
.t + .caret { margin: 0 -3px 0 -1px; }
.t.on { background: linear-gradient(#fdd669, #ffef9a); border: 1px solid #c29a42; border-radius: 2px; }
.t.b { font: bold 14px "Liberation Serif", serif; }
.t.i { font: italic bold 14px "Liberation Serif", serif; }
.t.u { font: bold 14px "Liberation Serif", serif; text-decoration: underline; }
.t.u + .caret { margin-left: 2px; }
.t.bucket { margin-left: 2px; }
.t.fc { width: 18px; height: 16px; margin-left: 9px; font: bold 14px "Liberation Serif", serif; color: #2a4d9b; border-bottom: 4px solid #f00; }
.t.fc + .caret { margin-left: 3px; }
.t.pct { font-size: 13px; margin-left: 8px; }
.t.comma { font: bold 18px "Liberation Serif", serif; padding-bottom: 8px; }
.t.dec { flex-direction: column; align-items: flex-end; font-size: 9px; font-weight: 600; line-height: 8px; }
.dec span { display: flex; align-items: center; }
.number .sep { margin-right: 1px; }
.ab { font: bold 10px "Liberation Serif", serif; }
.grow { display: flex; align-items: flex-start; font: bold 16px "Liberation Serif", serif; color: #444; margin-left: 5px; }
.grow svg { margin-top: 2px; }
.grow.small { font-size: 13px; margin-left: 7px; }
.grow.small svg { margin-top: 0; }
.sep { width: 1px; height: 20px; margin: 0 4px 0 3px; background: #cfd3d8; flex: none; }
.sep.wide { margin-left: 9px; }
.sep.tall { height: 56px; margin: 7px 2px 0 auto; }
.alignment .body > .rows:last-child { padding-right: 6px; }
select { appearance: none; height: 22px; border: 1px solid #c9ccd1; padding: 0 2px; background: #fff url("data:image/svg+xml,%3Csvg xmlns='http://www.w3.org/2000/svg' width='6' height='3'%3E%3Cpath d='M0 0h6L3 3z' fill='%23666'/%3E%3C/svg%3E") no-repeat right 4px center; }
.family { width: 113px; }
.size { width: 44px; margin-left: -1px; }
.format { width: 134px; }

/* formula bar */
.formula { height: 29px; flex: none; display: flex; padding: 4px 0; background: #d9dde4; border-bottom: 1px solid #8b9097; }
.formula input { border: 1px solid #a0a5ac; border-width: 1px 0; background: #fff; padding: 0; height: 21px; outline: 0; }
.formula .name { width: 142px; text-align: center; font-size: 12px; }
.namedrop { width: 18px; background: #fff; border: 1px solid #a0a5ac; border-width: 1px 0; line-height: 0; }
.fx { width: 85px; display: flex; align-items: center; justify-content: space-between; padding: 0 6px 0 4px; background: #dfe2e7; border: 1px solid #a0a5ac; border-radius: 10px 0 0 10px; }
.fx button { font: italic bold 15px "Liberation Serif", serif; color: #333; }
.fx small { font-size: 11px; }
.knob { width: 9px; height: 8px; border-radius: 4px; background: linear-gradient(#b4b8be, #f4f5f7); }
.formula .entry { flex: 1; min-width: 0; }
.expand { width: 16px; background: #dde0e5; border: 1px solid #a0a5ac; display: flex; align-items: center; justify-content: center; }

/* worksheet */
.work { flex: 1; min-height: 0; display: flex; }
.sheet { flex: 1; min-width: 0; overflow: hidden; background: #fff; }
#grid { width: 1547px; table-layout: fixed; border-collapse: separate; border-spacing: 0; font: 10px/14px "Noto Sans", sans-serif; color: #000; }
.rownum { width: 27px; }
#grid th, #grid td { padding: 0; overflow: hidden; white-space: nowrap; }
#grid th { height: 14px; background: #dfe2e7; box-shadow: inset -1px -1px #a4a9af; font: 11px/13px Roboto, sans-serif; color: #3a3a3a; vertical-align: bottom; }
#grid .letters th { height: 13px; background: linear-gradient(#ffd05c, #ffec7e); box-shadow: inset -1px -1px #c08a34; vertical-align: middle; }
#grid .letters .corner { background: #dfe2e7; box-shadow: inset -1px -1px #a4a9af; }
#grid td { text-align: center; box-shadow: inset -1px -1px #000; }
#grid td.l { text-align: left; padding-left: 2px; }
#grid td.r { text-align: right; padding-right: 2px; }
#grid td.bot { vertical-align: bottom; }
#grid td.red { color: #f00; }
#grid .tall td { height: 42px; }
.rot { display: inline-block; writing-mode: vertical-rl; transform: rotate(180deg); vertical-align: middle; }
.head { font-weight: 700; line-height: 12px; }
.head .rot { font-size: 11px; }
#grid .head td { height: 70px; }
#grid .head.low td { height: 14px; }
#grid .head td.L { font-size: 11px; line-height: 14px; }
#grid .head td.deep { padding-bottom: 3px; }
#grid .head td.full { padding-bottom: 0; }
#grid .head td.cat { padding-top: 11px; }
#grid .last td:nth-child(3), #grid .last td:nth-child(5) { box-shadow: inset -1px 0 #000; }
#grid .band td { height: 15px; background: #fcd5b4; font-size: 9px; font-weight: 800; line-height: 12px; }
#grid .band th { height: 15px; }
#grid .band.open td { box-shadow: inset 0 1px #000; }
#grid .black td { height: 14px; background: #000; }
#grid .black th { height: 14px; }
#grid .blank td { height: 14px; box-shadow: inset 0 -1px #000, inset -1px 0 #d4d7db; }

/* double rule above and below the selected row */
#grid .dbl td.deep, #grid .dbl.low td { box-shadow: inset 0 -1px #fff, inset 0 -2px #000, inset -1px 0 #000; }
#grid .sel th { background: #a3a3a3; }
#grid .sel td { background: #a5cdf0; box-shadow: inset 0 1px #000, inset 0 -1px #fff, inset 0 -2px #000, inset -1px 0 #123; }
#grid .sel td:nth-child(2) { background: #ff0; box-shadow: inset 0 -1px #fff, inset 1px 1px #00f, inset 0 -2px #00f, inset -1px 0 #123; }
#grid .sel td:nth-child(4) { box-shadow: none; border: 1px dashed #2b1c10; padding-right: 1px; }
#grid td.err { background-image: linear-gradient(135deg, #007a00 4px, transparent 4px); }

.vscroll { width: 20px; flex: none; display: flex; flex-direction: column; align-items: center; background: #dde0ea; border-right: 4px solid #e9ebef; padding-right: 1px; }
.vscroll .split { width: 14px; height: 8px; border: 2px solid #9a9fa8; background: #fff; }
.vscroll .up, .vscroll .down { width: 9px; height: 5px; margin: 6px 0; background: #555; clip-path: polygon(50% 0, 100% 100%, 0 100%); }
.vscroll .down { margin: auto 0 7px; clip-path: polygon(0 0, 100% 0, 50% 100%); }
.vscroll .thumb { width: 14px; height: 17px; margin-top: 163px; border: 1px solid #888d96; border-radius: 1px; background: repeating-linear-gradient(#f3f4f7 0 2px, #8d929b 2px 3px) content-box, #f3f4f7; padding: 3px 3px 2px; }

/* sheet tabs */
.sheetbar { height: 17px; flex: none; display: flex; background: #dde0e6; border-top: 1px solid #a4a9b0; border-bottom: 1px solid #8d9299; }
.nav { width: 63px; flex: none; display: flex; justify-content: space-between; align-items: center; padding: 0 6px 0 5px; border-right: 1px solid #8d9299; }
.sheets { flex: 1; min-width: 0; display: flex; overflow: hidden; padding-left: 7px; font-size: 12px; line-height: 15px; color: #555; }
.sheets button { display: flex; flex: none; gap: 4px; padding-right: 9px; line-height: 15px; }
.sheets .active { background: #fff; font-size: 13px; font-weight: 700; color: #333; padding: 0 0 0 11px; }
.sheets .active svg { display: none; }
.hscroll { width: 389px; flex: none; display: flex; align-items: center; padding-right: 22px; }
.hscroll .split { width: 6px; height: 13px; border: 1px solid #777; background: #fff; }
.hscroll .left, .hscroll .right { width: 5px; height: 9px; margin: 0 6px; background: #444; clip-path: polygon(100% 0, 100% 100%, 0 50%); }
.hscroll .right { margin: 0 8px; clip-path: polygon(0 0, 100% 50%, 0 100%); }
.hscroll .track { flex: 1; height: 15px; }
.hscroll .thumb { display: block; width: 160px; height: 15px; border: 1px solid #8d929b; border-radius: 2px; background: repeating-linear-gradient(90deg, #8d929b 0 1px, #f3f4f7 1px 2px) center / 8px 7px no-repeat, linear-gradient(#fafbfc, #dfe2e8); }

/* status bar */
.status { height: 22px; flex: none; display: flex; align-items: center; padding: 0 4px 2px 8px; background: linear-gradient(#dcdfe3, #b9bdc3); color: #333; }
.status .msg { width: 675px; line-height: 20px; border-right: 1px solid #888d94; }
.sums { margin-left: auto; display: flex; gap: 13px; padding-right: 8px; border-right: 1px solid #9a9ea5; line-height: 18px; }
.views { display: flex; gap: 3px; margin-left: 3px; }
.views button { width: 17px; height: 18px; display: flex; align-items: center; justify-content: center; }
.views .on { background: linear-gradient(#fdd669, #ffef9a); border: 1px solid #c29a42; border-radius: 2px; width: 19px; }
.zoom { margin: 0 13px 0 9px; }
input[type=range] { appearance: none; width: 100px; height: 16px; background: linear-gradient(#777, #777) center / 100% 1px no-repeat, linear-gradient(#777, #777) center / 1px 7px no-repeat; }
input[type=range]::-webkit-slider-thumb { appearance: none; width: 11px; height: 13px; background: url("data:image/svg+xml,%3Csvg xmlns='http://www.w3.org/2000/svg' width='11' height='13'%3E%3Cpath d='M1.500.5h8v8l-4 4-4-4z' fill='%23f4f5f7' stroke='%23666'/%3E%3C/svg%3E"); }

/* windows taskbar */
.taskbar { height: 47px; flex: none; display: grid; grid-template-columns: 1fr auto 1fr; align-items: center; background: #cbe6ec; color: #222; font-size: 12px; line-height: 16px; }
.weather { display: flex; gap: 3px; padding-left: 20px; }
.weather div, .two { display: flex; flex-direction: column; }
.weather svg { margin-top: -2px; }
.weather .dim { color: #555; }
.badge { font-size: 10px; fill: #fff; }
.apps { display: flex; align-items: center; gap: 10px; padding-left: 1px; }
.app { position: relative; width: 34px; height: 38px; display: flex; align-items: center; justify-content: center; border-radius: 4px; }
.run::after { content: ""; position: absolute; bottom: 0; left: 14px; width: 6px; height: 3px; border-radius: 2px; background: #7b8b90; }
.cur { background: #e9f5f8; box-shadow: 3px 0 #d9eef2; }
.cur::after { left: 9px; width: 16px; background: #0078d4; }
.search { width: 218px; height: 30px; display: flex; align-items: center; gap: 9px; padding: 0 6px 0 11px; border: 1px solid #b9cfd5; border-radius: 15px; background: #f0f8fa; margin-right: -3px; }
.search input { flex: 1; min-width: 0; border: 0; padding: 0; outline: 0; background: none; font-size: 13px; }
.search input::placeholder { color: #555; }
.tray { display: flex; align-items: center; justify-content: flex-end; gap: 9px; padding-right: 19px; }
.tray > :first-child { margin-right: 10px; }
.mid { text-align: center; margin-right: 7px; }
.end { text-align: right; margin-left: 6px; }
```
